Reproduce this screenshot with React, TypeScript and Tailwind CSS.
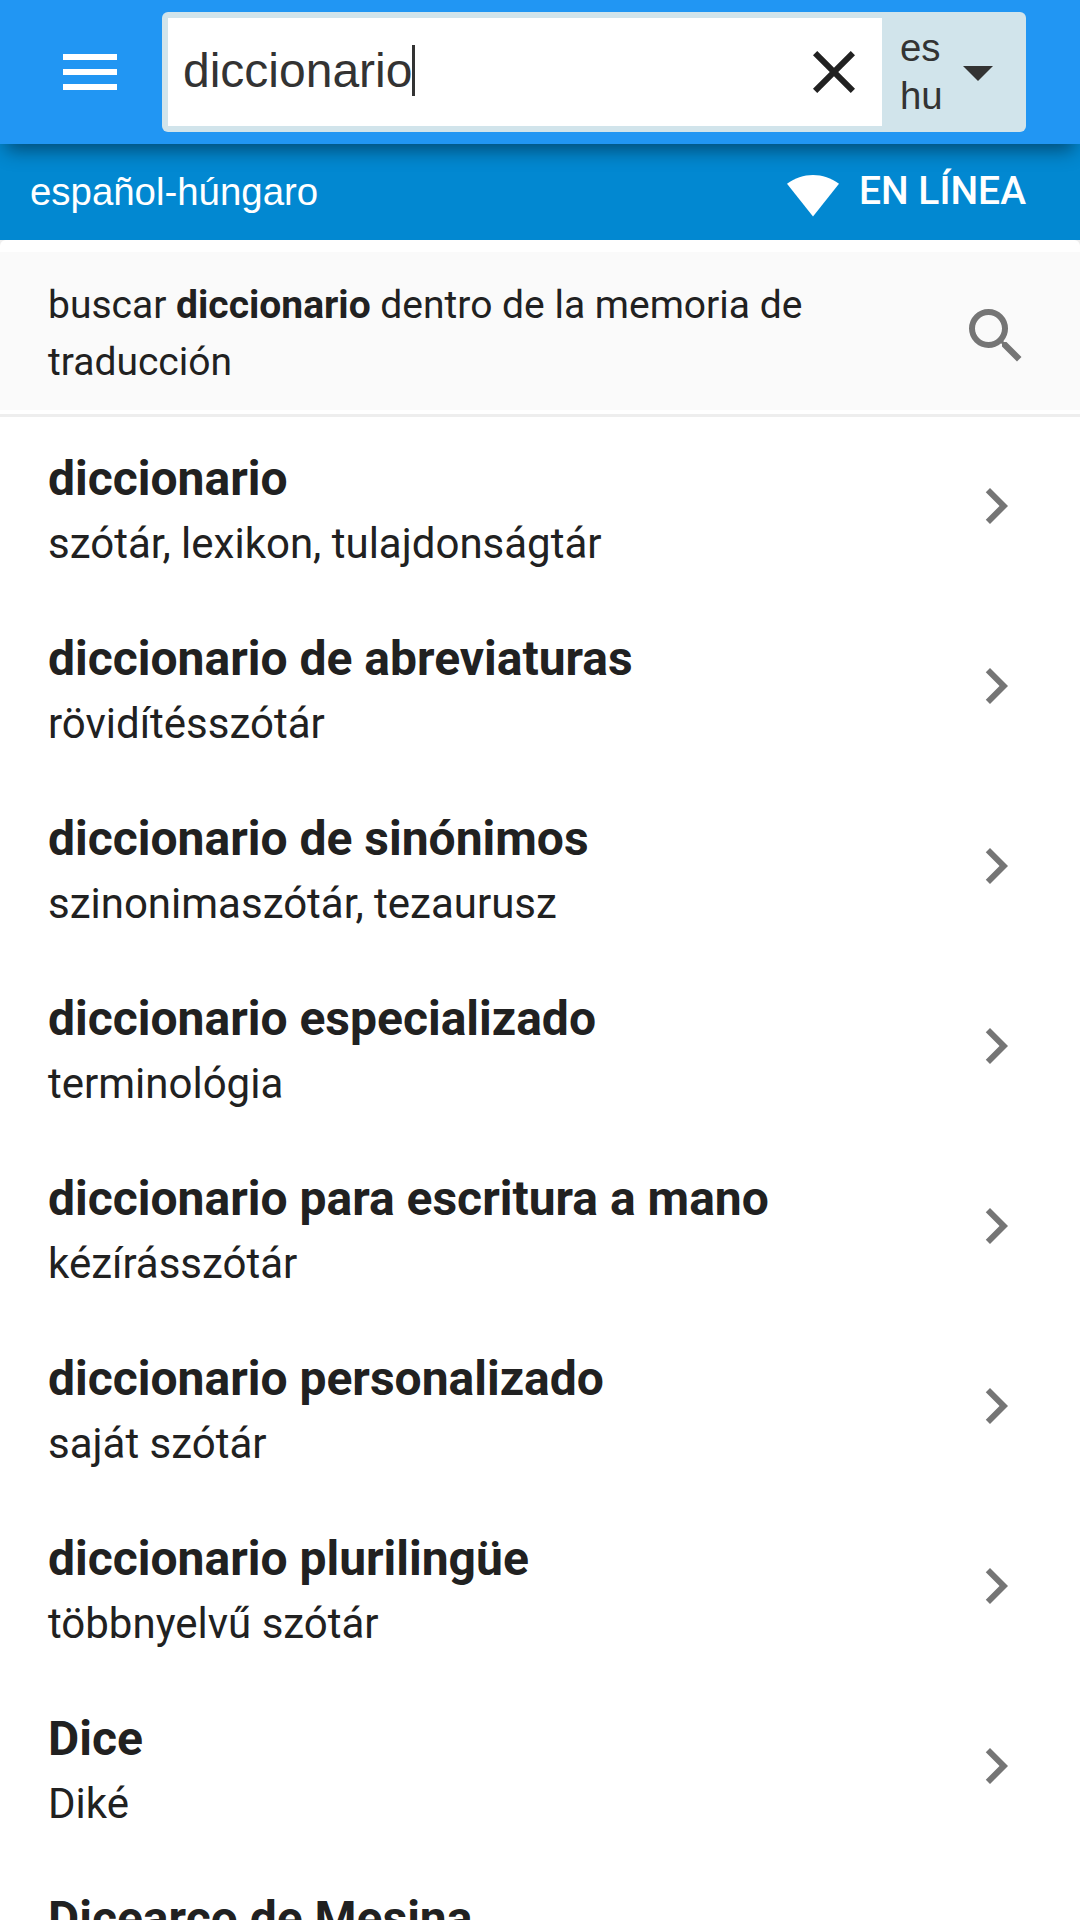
import { MdArrowDropDown, MdChevronRight, MdClose, MdMenu, MdSearch } from "react-icons/md";

const entries = [
  { term: "diccionario", translation: "szótár, lexikon, tulajdonságtár" },
  { term: "diccionario de abreviaturas", translation: "rövidítésszótár" },
  { term: "diccionario de sinónimos", translation: "szinonimaszótár, tezaurusz" },
  { term: "diccionario especializado", translation: "terminológia" },
  { term: "diccionario para escritura a mano", translation: "kézírásszótár" },
  { term: "diccionario personalizado", translation: "saját szótár" },
  { term: "diccionario plurilingüe", translation: "többnyelvű szótár" },
  { term: "Dice", translation: "Diké" },
  { term: "Dicearco de Mesina", translation: "" },
];

function SearchHeader() {
  return (
    <header className="relative z-10 flex h-36 items-center bg-[#2196f3] px-[54px] font-['Liberation_Sans',sans-serif] shadow-[0_12px_18px_-6px_rgba(0,0,0,0.45)]">
      <MdMenu className="size-[72px] shrink-0 text-white" />
      <div className="ml-9 flex h-[120px] flex-1 rounded-md bg-[#d1e4eb] py-1.5 pl-1.5">
        <div className="flex w-[714px] items-center bg-white pr-3 pl-[15px]">
          <span className="-mt-0.5 text-5xl leading-[54px] text-[#333]">diccionario</span>
          <span className="-mt-[3px] h-[51px] w-[3px] bg-[#333]" />
          <MdClose className="ml-auto size-[72px] text-[#212121]" />
        </div>
        <div className="flex flex-1 items-center pl-[18px] text-[#333]">
          <div className="-mt-px w-[42px] text-[38.4px] leading-[48px]">
            <div>es</div>
            <div>hu</div>
          </div>
          <MdArrowDropDown className="size-[72px] shrink-0" />
        </div>
      </div>
    </header>
  );
}

function StatusBar() {
  return (
    <div className="flex h-24 items-center justify-between bg-[#0288d1] pr-[54px] pl-[30px] text-white">
      <span className="-mt-px font-['Liberation_Sans',sans-serif] text-[38.4px] leading-[48px]">español-húngaro</span>
      <div className="flex items-center gap-5">
        <svg width="52" height="43" viewBox="0 0 53 43" fill="currentColor" className="mt-1.5">
          <path d="M0 9.5C8 3.5 17 .5 26.5 .5S45 3.5 53 9.5L26.5 43z" />
        </svg>
        <span className="-mt-0.5 text-[39px] leading-[48px] font-medium">EN LÍNEA</span>
      </div>
    </div>
  );
}

function MemorySearch() {
  return (
    <div className="bg-[#eee]">
      <div className="rounded-t-md border-b-[3px] border-[#eee] bg-white pt-3 pb-1">
        <div className="flex h-[158px] items-start justify-between bg-[#fafafa] px-12 pt-[25px]">
          <p className="w-[800px] text-[39px] leading-[57px]">
            buscar <b>diccionario</b> dentro de la memoria de traducción
          </p>
          <MdSearch className="mt-[23px] size-[72px] text-[#757575]" />
        </div>
      </div>
    </div>
  );
}

export default function App() {
  return (
    <div className="h-[1920px] w-[1080px] overflow-hidden bg-white font-['Roboto',sans-serif] text-[#212121]">
      <SearchHeader />
      <StatusBar />
      <MemorySearch />
      <ul className="-mt-px">
        {entries.map((entry) => (
          <li key={entry.term} className="flex h-[180px] items-start justify-between px-12 pt-[30px]">
            <div>
              <div className="text-5xl leading-[66px] font-bold">{entry.term}</div>
              <div className="mt-0.5 text-[42px] leading-[60px]">{entry.translation}</div>
            </div>
            <MdChevronRight className="mt-6 size-[72px] shrink-0 text-[#757575]" />
          </li>
        ))}
      </ul>
    </div>
  );
}
